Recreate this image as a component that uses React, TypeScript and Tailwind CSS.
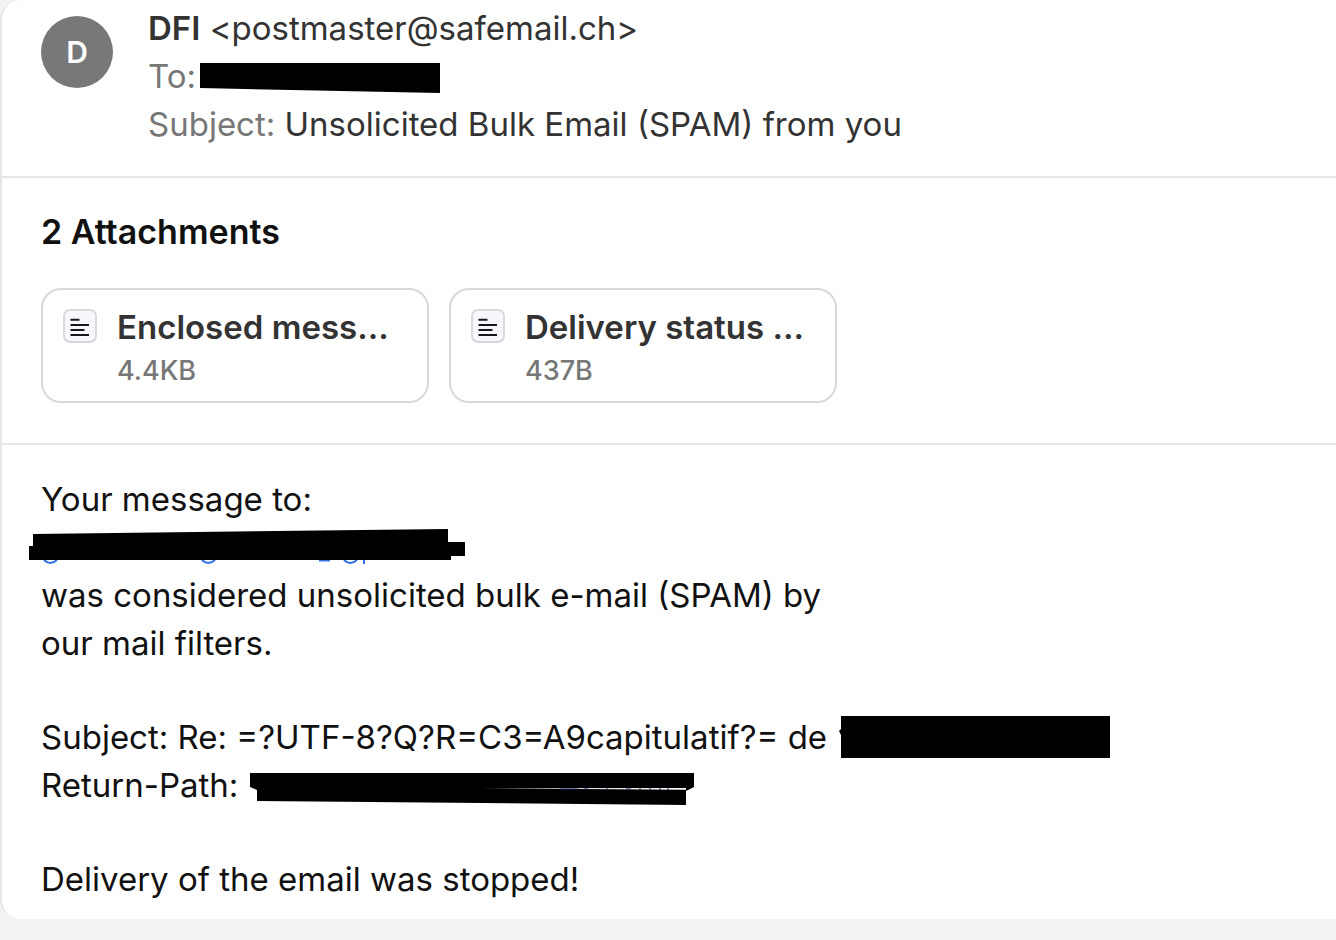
interface Attachment {
	name: string;
	size: string;
}

const attachments: Attachment[] = [
	{ name: "Enclosed mess...", size: "4.4KB" },
	{ name: "Delivery status ...", size: "437B" }
];

function DocumentIcon() {
	return (
		<svg
			width="34"
			height="34"
			viewBox="0 0 34 34"
			aria-hidden="true"
			className="shrink-0"
		>
			<rect
				x="1"
				y="1"
				width="32"
				height="32"
				rx="6"
				fill="#f7f8fb"
				stroke="#d8d9dd"
				strokeWidth="2"
			/>
			<path
				d="M7.5 10.8h9M7.5 16h18.5M7.5 21h14M7.5 26h18.5"
				stroke="#17181c"
				strokeWidth="2.1"
			/>
		</svg>
	);
}

function AttachmentCard({ name, size }: Attachment) {
	return (
		<button
			type="button"
			className="flex w-[388px] items-start gap-5 rounded-[20px] border-2 border-[#d9d9d9] px-5 pt-[19px] pb-2 text-left"
		>
			<DocumentIcon />
			<span className="-mt-1 flex flex-col">
				<span className="text-[33px] leading-[44px] font-semibold text-[#333333]">
					{name}
				</span>
				<span className="text-[27px] leading-[44px] font-medium text-[#777777]">
					{size}
				</span>
			</span>
		</button>
	);
}

function RecipientRedaction() {
	return (
		<svg width="240" height="30" viewBox="0 0 240 30" aria-hidden="true">
			<path d="M0 0h240v30L0 25z" />
		</svg>
	);
}

function AddressRedaction() {
	return (
		<svg
			width="436"
			height="36"
			viewBox="0 0 436 36"
			fill="none"
			aria-hidden="true"
			className="-ml-3"
		>
			<path
				d="M15 31q6 6 13 0M173 31q6 6 13 0M315 31q6 6 13 0M335 30v5"
				stroke="#3471e8"
				strokeWidth="2"
			/>
			<path d="M290 31h11" stroke="#3471e8" strokeWidth="3" />
			<path
				d="M4 5 419 0v13h17v14h-14v4H0V17h4z"
				fill="#000000"
			/>
		</svg>
	);
}

function SubjectRedaction() {
	return (
		<svg width="271" height="42" viewBox="0 0 271 42" aria-hidden="true">
			<path d="M2 0h269v42H2zM0 15l2-2v6z" />
		</svg>
	);
}

function ReturnPathRedaction() {
	return (
		<svg width="444" height="32" viewBox="0 0 444 32" aria-hidden="true">
			<path d="M0 0h444v14l-8 4v14L7 28V17l-7-3z" />
			<path d="M230 15.2 436 15v1.8z" fill="#ffffff" />
			<path
				d="M310 16h18M334 16h4M356 16h2M376 16h5M389 16h2M399 16h2M409 16h2M417 16h2"
				stroke="#18275d"
				strokeWidth="1"
			/>
		</svg>
	);
}

function MessageHeader() {
	return (
		<header className="flex gap-[35px] border-b-2 border-[#e6e6e6] px-[39px] pt-1 pb-7">
			<div className="mt-3 flex size-[72px] shrink-0 items-center justify-center rounded-full bg-[#77787a] text-[30px] font-semibold text-white">
				D
			</div>
			<div className="leading-[48px] text-[#333333]">
				<h1>
					<span className="font-semibold">DFI</span>{" "}
					&lt;postmaster@safemail.ch&gt;
				</h1>
				<p className="flex items-center gap-1">
					<span className="text-[#777777]">To:</span>
					<span className="pt-1">
						<RecipientRedaction />
					</span>
				</p>
				<p>
					<span className="text-[#777777]">Subject:</span> Unsolicited
					Bulk Email (SPAM) from you
				</p>
			</div>
		</header>
	);
}

export default function App() {
	return (
		<div className="min-h-screen bg-[#f2f3f5] pb-[22px] font-['Inter',sans-serif] text-[33px]">
			<main className="rounded-l-[20px] border-l-2 border-[#e6e6e6] bg-white">
				<MessageHeader />
				<section className="border-b-2 border-[#e6e6e6] px-[39px] pt-[30px] pb-10">
					<h2 className="mb-8 text-[34px] leading-[48px] font-semibold text-[#111111]">
						2 Attachments
					</h2>
					<div className="flex flex-wrap gap-5">
						{attachments.map((attachment) => (
							<AttachmentCard key={attachment.name} {...attachment} />
						))}
					</div>
				</section>
				<article className="flex flex-col gap-[46px] px-[39px] pt-[30px] pb-4 leading-[48px] text-[#111111]">
					<div>
						<p>Your message to:</p>
						<div className="flex h-12 items-center">
							<AddressRedaction />
						</div>
						<p>
							was considered unsolicited bulk e-mail (SPAM) by
							<br />
							our mail filters.
						</p>
					</div>
					<div>
						<p className="flex items-center gap-3">
							Subject: Re: =?UTF-8?Q?R=C3=A9capitulatif?= de
							<SubjectRedaction />
						</p>
						<p className="flex items-center gap-3">
							Return-Path:
							<span className="pt-2">
								<ReturnPathRedaction />
							</span>
						</p>
					</div>
					<p>Delivery of the email was stopped!</p>
				</article>
			</main>
		</div>
	);
}
